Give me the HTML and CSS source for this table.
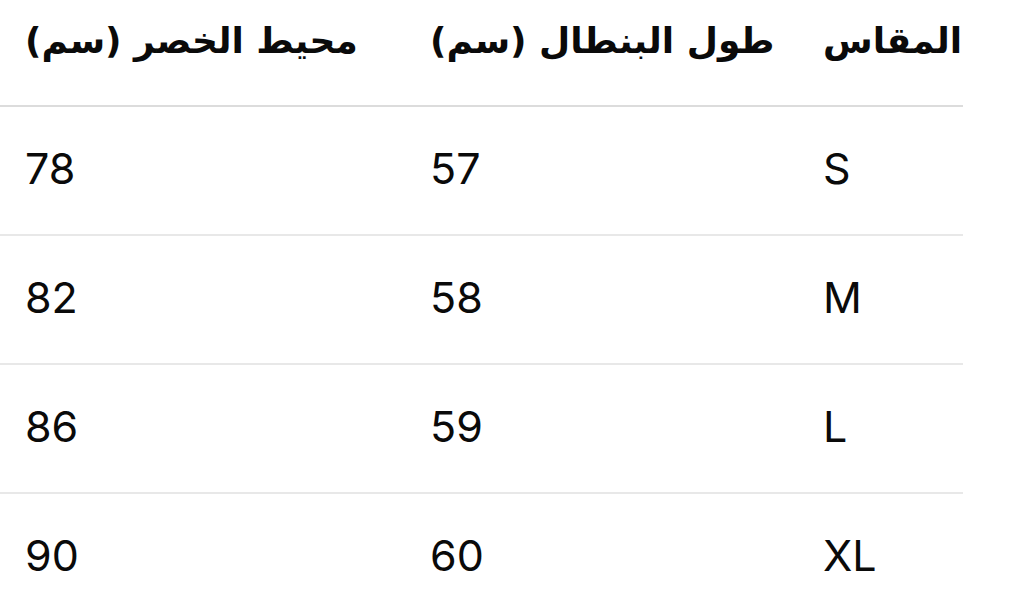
FILE: index.html
```html
<!DOCTYPE html>
<html lang="ar">
<head>
<meta charset="utf-8">
<title>جدول المقاسات</title>
<link rel="stylesheet" href="styles.css">
</head>
<body>
<table class="size-table" dir="rtl">
  <colgroup>
    <col class="col-size">
    <col class="col-length">
    <col class="col-waist">
  </colgroup>
  <thead>
    <tr>
      <th>المقاس</th>
      <th>طول البنطال (سم)</th>
      <th>محيط الخصر (سم)</th>
    </tr>
  </thead>
  <tbody>
    <tr><td>S</td><td>57</td><td>78</td></tr>
    <tr><td>M</td><td>58</td><td>82</td></tr>
    <tr><td>L</td><td>59</td><td>86</td></tr>
    <tr><td>XL</td><td>60</td><td>90</td></tr>
  </tbody>
</table>
</body>
</html>
```

FILE: styles.css
```css
html, body {
  margin: 0;
  padding: 0;
  background: #ffffff;
}

body {
  overflow: hidden;
  height: 596px;
}

.size-table {
  width: 963px;
  table-layout: fixed;
  border-collapse: collapse;
  font-family: Inter, "DejaVu Sans", sans-serif;
  color: #0a0a0a;
}

.col-size { width: 165px; }
.col-length { width: 393px; }
.col-waist { width: 405px; }

.size-table th,
.size-table td {
  text-align: left;
  padding: 0 0 0 25px;
  white-space: nowrap;
}

.size-table th {
  font-family: "DejaVu Sans", sans-serif;
  font-weight: 700;
  font-size: 36px;
  height: 106px;
  vertical-align: top;
  padding-top: 20px;
  box-sizing: border-box;
  border-bottom: 2px solid #dcdcdc;
}

.size-table td {
  font-size: 43px;
  font-weight: 400;
  height: 121px;
  vertical-align: middle;
  padding-bottom: 6px;
  border-bottom: 2px solid #e8e8e8;
}

.size-table tbody tr:last-child td {
  border-bottom: none;
}
```
